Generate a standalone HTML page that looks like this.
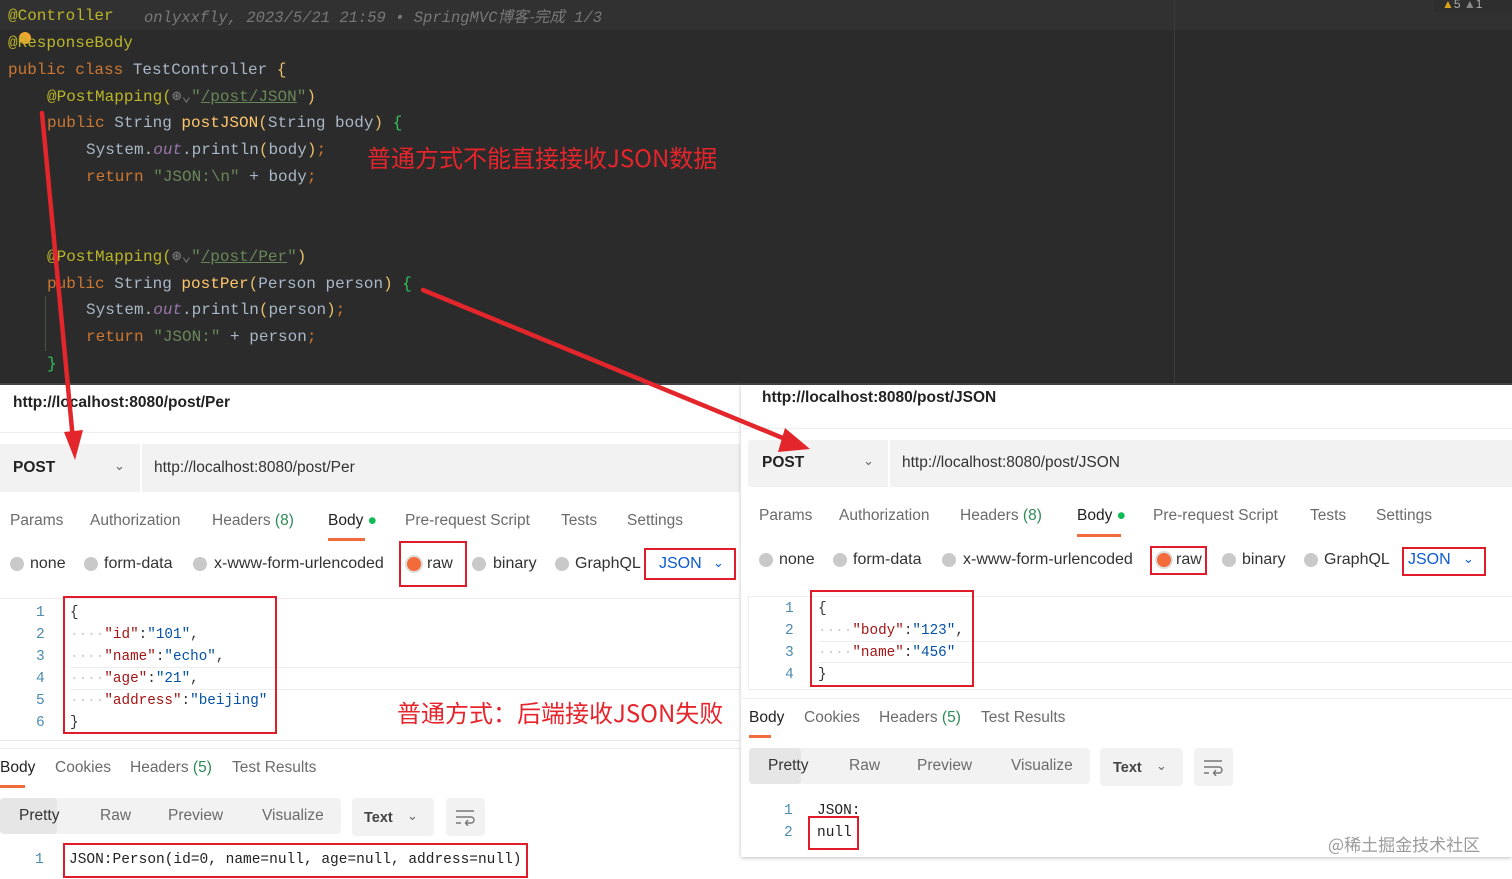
<!DOCTYPE html>
<html><head><meta charset="utf-8"><style>
*{margin:0;padding:0;box-sizing:border-box}
body{width:1512px;height:879px;overflow:hidden;background:#fff;position:relative;font-family:"Liberation Sans","Noto Sans CJK SC",sans-serif}
.a{position:absolute;white-space:pre;line-height:20px}
.m{font-family:"Liberation Mono","DejaVu Sans Mono",monospace}
.code{font-family:"Liberation Mono","DejaVu Sans Mono",monospace;font-size:16px;color:#a9b7c6;position:absolute;white-space:pre;line-height:20px}
.an{color:#bbb529}.kw{color:#cc7832}.st{color:#6a8759}.fn{color:#ffc66d}.it{color:#9876aa;font-style:italic}.br{color:#e8bf6a}.gb{color:#33c05a}
.tab{font-size:15.5px;color:#6b6b6b}
.rt{font-size:16px;color:#333}
.rad{position:absolute;width:14px;height:14px;border-radius:50%;background:#c9c9c9}
.rb{position:absolute;border:2px solid #e01c2a}
.gray{position:absolute;background:#f2f2f2;border-radius:4px}
.ln{color:#4b8bb0;font-size:14px}
.k{color:#a31515}.v{color:#0451a5}
.dots{color:#ccc}
.red{color:#e6242b;font-size:24px;font-family:"Noto Sans CJK SC",sans-serif}
</style></head><body>
<div style="position:absolute;left:0;top:0;width:1512px;height:383px;background:#2b2b2b"></div>
<div style="position:absolute;left:0;top:0;width:1512px;height:30px;background:#313131"></div>
<div style="position:absolute;left:1174px;top:0;width:1px;height:383px;background:#3c3c3c"></div>
<div style="position:absolute;left:1434px;top:0;width:78px;height:12px;background:#2e2e2e"></div>
<div class="a" style="left:1442px;top:-6px;font-size:12px;color:#aaa"><span style="color:#d8a31a">▲</span>5 <span style="color:#888">▲</span>1</div>
<div style="position:absolute;left:0;top:383px;width:1512px;height:2px;background:#444"></div>

<div class="code" style="left:8px;top:6px"><span class="an">@Controller</span></div>
<div class="code" style="left:144px;top:6px;color:#787878;font-style:italic;font-size:15.5px">onlyxxfly, 2023/5/21 21:59 • SpringMVC<span style="font-family:'Noto Sans CJK SC',sans-serif">博客-完成</span> 1/3</div>
<div style="position:absolute;left:19px;top:32px;width:12px;height:12px;border-radius:50%;background:#f0a530"></div>
<div class="code" style="left:8px;top:33px"><span class="an">@ResponseBody</span></div>
<div class="code" style="left:8px;top:60px"><span class="kw">public class</span> TestController <span class="br">{</span></div>
<div class="code" style="left:47px;top:87px"><span class="an">@PostMapping(</span><span style="color:#777">⊛⌄</span><span class="st">"<u>/post/JSON</u>"</span><span class="br">)</span></div>
<div class="code" style="left:47px;top:113px"><span class="kw">public</span> String <span class="fn">postJSON</span><span class="br">(</span>String body<span class="br">)</span> <span class="gb">{</span></div>
<div class="code" style="left:86px;top:140px">System.<span class="it">out</span>.println<span class="br">(</span>body<span class="br">)</span><span class="kw">;</span></div>
<div class="code" style="left:86px;top:167px"><span class="kw">return</span> <span class="st">"JSON:\n"</span> + body<span class="kw">;</span></div>
<div class="code" style="left:47px;top:247px"><span class="an">@PostMapping(</span><span style="color:#777">⊛⌄</span><span class="st">"<u>/post/Per</u>"</span><span class="br">)</span></div>
<div class="code" style="left:47px;top:274px"><span class="kw">public</span> String <span class="fn">postPer</span><span class="br">(</span>Person person<span class="br">)</span> <span class="gb">{</span></div>
<div class="code" style="left:86px;top:300px">System.<span class="it">out</span>.println<span class="br">(</span>person<span class="br">)</span><span class="kw">;</span></div>
<div class="code" style="left:86px;top:327px"><span class="kw">return</span> <span class="st">"JSON:"</span> + person<span class="kw">;</span></div>
<div class="code" style="left:47px;top:354px"><span class="gb">}</span></div>
<div style="position:absolute;left:45px;top:296px;width:1px;height:55px;background:#3d5a3d"></div>
<div class="a red" style="left:367px;top:142px;line-height:30px">普通方式不能直接接收JSON数据</div>

<!-- LEFT -->
<div class="a" style="left:13px;top:393px;font-size:15.5px;color:#222;font-weight:bold">http://localhost:8080/post/Per</div>
<div style="position:absolute;left:0;top:432px;width:740px;height:1px;background:#eee"></div>
<div class="gray" style="left:0;top:444px;width:740px;height:48px;border-radius:0"></div>
<div style="position:absolute;left:140px;top:444px;width:2px;height:48px;background:#fff"></div>
<div class="a" style="left:13px;top:458px;font-size:15.5px;color:#222;font-weight:bold">POST</div>
<div class="a" style="left:114px;top:456px;font-size:13px;color:#666">⌄</div>
<div class="a" style="left:154px;top:458px;font-size:15.5px;color:#333">http://localhost:8080/post/Per</div>
<div class="a tab" style="left:10px;top:511px">Params</div>
<div class="a tab" style="left:90px;top:511px">Authorization</div>
<div class="a tab" style="left:212px;top:511px">Headers <span style="color:#2e8b57">(8)</span></div>
<div class="a tab" style="left:328px;top:511px;color:#222">Body <span style="color:#0cbb52">●</span></div>
<div style="position:absolute;left:328px;top:538px;width:37px;height:3px;background:#f26b3a"></div>
<div class="a tab" style="left:405px;top:511px">Pre-request Script</div>
<div class="a tab" style="left:561px;top:511px">Tests</div>
<div class="a tab" style="left:627px;top:511px">Settings</div>
<div class="rad" style="left:10px;top:557px"></div><div class="a rt" style="left:30px;top:554px">none</div>
<div class="rad" style="left:84px;top:557px"></div><div class="a rt" style="left:104px;top:554px">form-data</div>
<div class="rad" style="left:193px;top:557px"></div><div class="a rt" style="left:214px;top:554px">x-www-form-urlencoded</div>
<div class="rad" style="left:407px;top:557px;background:#f26b3a;box-shadow:0 0 0 2px #ddd"></div><div class="a rt" style="left:427px;top:554px">raw</div>
<div class="rad" style="left:472px;top:557px"></div><div class="a rt" style="left:493px;top:554px">binary</div>
<div class="rad" style="left:555px;top:557px"></div><div class="a rt" style="left:575px;top:554px">GraphQL</div>
<div class="a rt" style="left:659px;top:554px;color:#0d5bd1">JSON</div><div class="a" style="left:713px;top:553px;color:#0d5bd1;font-size:13px">⌄</div>
<div class="rb" style="left:399px;top:541px;width:68px;height:46px"></div>
<div class="rb" style="left:644px;top:548px;width:92px;height:32px"></div>
<div style="position:absolute;left:0;top:598px;width:740px;height:143px;border-top:1px solid #eee;border-bottom:1px solid #e5e5e5"></div>
<div style="position:absolute;left:70px;top:667px;width:670px;height:1px;background:#eee"></div>
<div style="position:absolute;left:70px;top:689px;width:670px;height:1px;background:#eee"></div>
<div class="a m ln" style="left:36px;top:602px;line-height:22px;font-size:14.5px">1
2
3
4
5
6</div>
<div class="a m" style="left:70px;top:602px;line-height:22px;font-size:14.3px;color:#333">{
<span class="dots">····</span><span class="k">"id"</span>:<span class="v">"101"</span>,
<span class="dots">····</span><span class="k">"name"</span>:<span class="v">"echo"</span>,
<span class="dots">····</span><span class="k">"age"</span>:<span class="v">"21"</span>,
<span class="dots">····</span><span class="k">"address"</span>:<span class="v">"beijing"</span>
}</div>
<div class="rb" style="left:63px;top:596px;width:214px;height:138px"></div>
<div class="a red" style="left:397px;top:697px;line-height:30px">普通方式：后端接收JSON失败</div>
<div style="position:absolute;left:0;top:748px;width:740px;height:1px;background:#eee"></div>
<div class="a tab" style="left:0;top:758px;color:#222">Body</div>
<div style="position:absolute;left:0;top:785px;width:25px;height:3px;background:#f26b3a"></div>
<div class="a tab" style="left:55px;top:758px">Cookies</div>
<div class="a tab" style="left:130px;top:758px">Headers <span style="color:#2e8b57">(5)</span></div>
<div class="a tab" style="left:232px;top:758px">Test Results</div>
<div class="gray" style="left:0;top:798px;width:341px;height:36px"></div>
<div class="gray" style="left:0;top:798px;width:57px;height:36px;background:#e6e6e6"></div>
<div class="a tab" style="left:19px;top:806px;color:#333">Pretty</div>
<div class="a tab" style="left:100px;top:806px">Raw</div>
<div class="a tab" style="left:168px;top:806px">Preview</div>
<div class="a tab" style="left:262px;top:806px">Visualize</div>
<div class="gray" style="left:352px;top:798px;width:82px;height:38px"></div>
<div class="a" style="left:364px;top:808px;font-size:14.5px;color:#444;font-weight:bold">Text</div><div class="a" style="left:407px;top:806px;font-size:13px;color:#666">⌄</div>
<div class="gray" style="left:446px;top:798px;width:39px;height:38px"></div>
<svg style="position:absolute;left:455px;top:808px" width="20" height="18" fill="none" stroke="#777" stroke-width="1.4"><path d="M1 3H19M1 9H16a3 3 0 0 1 0 6H11M13 12l-2.5 3 2.5 3M1 15H6"/></svg>
<div class="a m ln" style="left:35px;top:850px;font-size:14.5px">1</div>
<div class="a m" style="left:69px;top:850px;font-size:14.5px;color:#222">JSON:Person(id=0, name=null, age=null, address=null)</div>
<div class="rb" style="left:63px;top:843px;width:465px;height:35px"></div>

<!-- RIGHT -->
<div style="position:absolute;left:741px;top:385px;width:771px;height:472px;background:#fff;box-shadow:0 1px 4px rgba(0,0,0,.25)"></div>
<div class="a" style="left:762px;top:388px;font-size:15.5px;color:#222;font-weight:bold">http://localhost:8080/post/JSON</div>
<div style="position:absolute;left:742px;top:428px;width:770px;height:1px;background:#eee"></div>
<div class="gray" style="left:748px;top:440px;width:764px;height:47px;border-radius:3px 0 0 3px"></div>
<div style="position:absolute;left:888px;top:440px;width:2px;height:47px;background:#fff"></div>
<div class="a" style="left:762px;top:453px;font-size:15.5px;color:#222;font-weight:bold">POST</div>
<div class="a" style="left:863px;top:451px;font-size:13px;color:#666">⌄</div>
<div class="a" style="left:902px;top:453px;font-size:15.5px;color:#333">http://localhost:8080/post/JSON</div>
<div class="a tab" style="left:759px;top:506px">Params</div>
<div class="a tab" style="left:839px;top:506px">Authorization</div>
<div class="a tab" style="left:960px;top:506px">Headers <span style="color:#2e8b57">(8)</span></div>
<div class="a tab" style="left:1077px;top:506px;color:#222">Body <span style="color:#0cbb52">●</span></div>
<div style="position:absolute;left:1077px;top:534px;width:44px;height:3px;background:#f26b3a"></div>
<div class="a tab" style="left:1153px;top:506px">Pre-request Script</div>
<div class="a tab" style="left:1310px;top:506px">Tests</div>
<div class="a tab" style="left:1376px;top:506px">Settings</div>
<div class="rad" style="left:759px;top:553px"></div><div class="a rt" style="left:779px;top:550px">none</div>
<div class="rad" style="left:833px;top:553px"></div><div class="a rt" style="left:853px;top:550px">form-data</div>
<div class="rad" style="left:942px;top:553px"></div><div class="a rt" style="left:963px;top:550px">x-www-form-urlencoded</div>
<div class="rad" style="left:1157px;top:553px;background:#f26b3a;box-shadow:0 0 0 2px #ddd"></div><div class="a rt" style="left:1176px;top:550px">raw</div>
<div class="rad" style="left:1222px;top:553px"></div><div class="a rt" style="left:1242px;top:550px">binary</div>
<div class="rad" style="left:1304px;top:553px"></div><div class="a rt" style="left:1324px;top:550px">GraphQL</div>
<div class="a rt" style="left:1408px;top:550px;color:#0d5bd1">JSON</div><div class="a" style="left:1463px;top:549px;color:#0d5bd1;font-size:13px">⌄</div>
<div class="rb" style="left:1150px;top:546px;width:57px;height:29px"></div>
<div class="rb" style="left:1402px;top:547px;width:84px;height:29px"></div>
<div style="position:absolute;left:748px;top:596px;width:764px;height:94px;border:1px solid #eee;border-right:0"></div>
<div style="position:absolute;left:818px;top:641px;width:694px;height:1px;background:#eee"></div>
<div style="position:absolute;left:818px;top:662px;width:694px;height:1px;background:#eee"></div>
<div class="a m ln" style="left:785px;top:598px;line-height:22px;font-size:14.5px">1
2
3
4</div>
<div class="a m" style="left:818px;top:598px;line-height:22px;font-size:14.3px;color:#333">{
<span class="dots">····</span><span class="k">"body"</span>:<span class="v">"123"</span>,
<span class="dots">····</span><span class="k">"name"</span>:<span class="v">"456"</span>
}</div>
<div class="rb" style="left:810px;top:590px;width:164px;height:97px"></div>
<div style="position:absolute;left:742px;top:698px;width:770px;height:1px;background:#eee"></div>
<div class="a tab" style="left:749px;top:708px;color:#222">Body</div>
<div style="position:absolute;left:749px;top:735px;width:22px;height:3px;background:#f26b3a"></div>
<div class="a tab" style="left:804px;top:708px">Cookies</div>
<div class="a tab" style="left:879px;top:708px">Headers <span style="color:#2e8b57">(5)</span></div>
<div class="a tab" style="left:981px;top:708px">Test Results</div>
<div class="gray" style="left:749px;top:748px;width:341px;height:36px"></div>
<div class="gray" style="left:749px;top:748px;width:52px;height:36px;background:#e6e6e6"></div>
<div class="a tab" style="left:768px;top:756px;color:#333">Pretty</div>
<div class="a tab" style="left:849px;top:756px">Raw</div>
<div class="a tab" style="left:917px;top:756px">Preview</div>
<div class="a tab" style="left:1011px;top:756px">Visualize</div>
<div class="gray" style="left:1100px;top:748px;width:83px;height:38px"></div>
<div class="a" style="left:1113px;top:758px;font-size:14.5px;color:#444;font-weight:bold">Text</div><div class="a" style="left:1156px;top:756px;font-size:13px;color:#666">⌄</div>
<div class="gray" style="left:1194px;top:748px;width:39px;height:38px"></div>
<svg style="position:absolute;left:1203px;top:758px" width="20" height="18" fill="none" stroke="#777" stroke-width="1.4"><path d="M1 3H19M1 9H16a3 3 0 0 1 0 6H11M13 12l-2.5 3 2.5 3M1 15H6"/></svg>
<div class="a m ln" style="left:784px;top:800px;line-height:22px;font-size:14.5px">1
2</div>
<div class="a m" style="left:817px;top:800px;line-height:22px;font-size:14.5px;color:#222">JSON:
null</div>
<div class="rb" style="left:808px;top:816px;width:51px;height:34px"></div>
<div class="a" style="left:1328px;top:834px;font-size:17px;color:#9a9a9a;font-family:'Noto Sans CJK SC',sans-serif">@稀土掘金技术社区</div>

<svg style="position:absolute;left:0;top:0" width="1512" height="879">
<g stroke="#e3262b" stroke-width="4.5" fill="none" stroke-linecap="round">
<line x1="42" y1="113" x2="73" y2="440"/>
<line x1="423" y1="290" x2="790" y2="441"/>
</g>
<polygon points="64,432 83,430 75,460" fill="#e3262b"/>
<polygon points="785,428 810,449 778,452" fill="#e3262b"/>
</svg>
</body></html>
